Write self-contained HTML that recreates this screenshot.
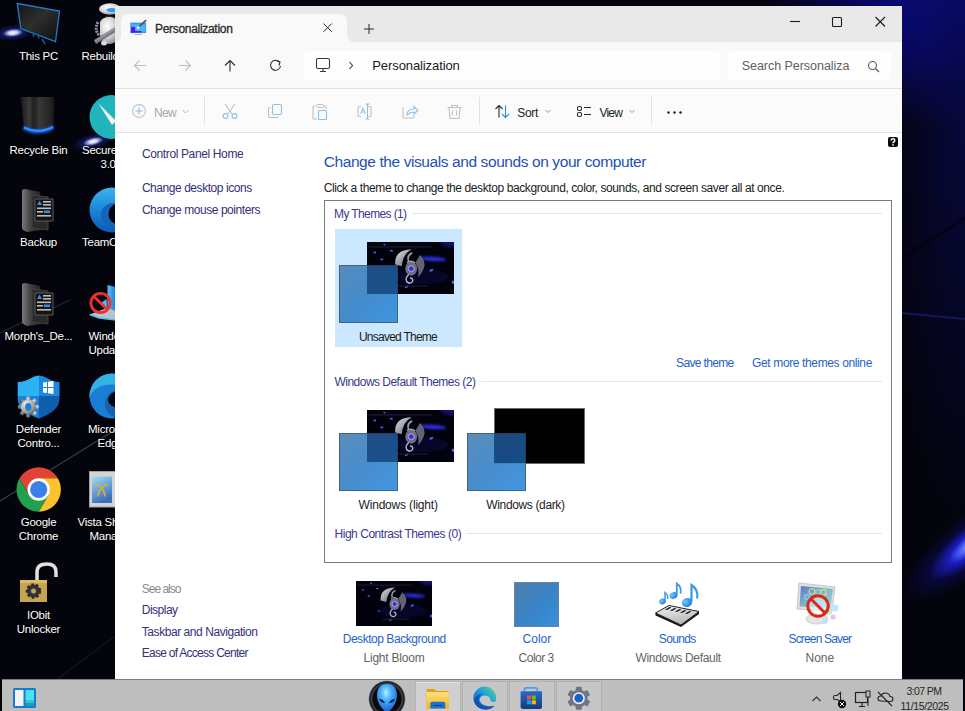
<!DOCTYPE html>
<html><head><meta charset="utf-8">
<style>
*{margin:0;padding:0;box-sizing:border-box}
html,body{width:965px;height:711px;overflow:hidden;background:#000;font-family:"Liberation Sans",sans-serif}
.a{position:absolute}
.t{position:absolute;white-space:nowrap}
svg.a{overflow:visible}
.lbl{position:absolute;color:#fff;font-size:11.5px;line-height:14px;text-align:center;width:90px;white-space:nowrap;text-shadow:1px 1px 1px #000,0 0 2px #000;letter-spacing:-0.25px}
</style></head><body>
<svg width="0" height="0" style="position:absolute"><defs><symbol id="wall" viewBox="0 0 100 60" preserveAspectRatio="none">
<defs>
<filter id="bl2" x="-50%" y="-50%" width="200%" height="200%"><feGaussianBlur stdDeviation="2"/></filter>
<filter id="bl1" x="-50%" y="-50%" width="200%" height="200%"><feGaussianBlur stdDeviation="0.5"/></filter>
<filter id="bl15" x="-50%" y="-50%" width="200%" height="200%"><feGaussianBlur stdDeviation="1.2"/></filter>
<linearGradient id="wing" x1="0" y1="0" x2="1" y2="1"><stop offset="0" stop-color="#e4e4ec"/><stop offset="1" stop-color="#5a5a68"/></linearGradient>
</defs>
<rect width="100" height="60" fill="#02020c"/>
<ellipse cx="100" cy="0" rx="16" ry="6" fill="#1a1ab0" opacity="0.55" filter="url(#bl2)"/>
<ellipse cx="62" cy="40" rx="32" ry="9" fill="#0a0a50" opacity="0.45" filter="url(#bl2)"/>
<ellipse cx="76" cy="19.5" rx="15" ry="2.6" fill="#3434ff" opacity="0.85" filter="url(#bl15)" transform="rotate(4 76 19.5)"/>
<g filter="url(#bl1)" fill="#5060ff">
<ellipse cx="9" cy="12" rx="1.6" ry="1"/><ellipse cx="17" cy="20" rx="1.8" ry="1.1"/><ellipse cx="28" cy="10" rx="1.8" ry="1.1"/>
<ellipse cx="20" cy="3" rx="1.4" ry="0.9"/><ellipse cx="74" cy="32.6" rx="2.4" ry="1.3" transform="rotate(-25 74 32.6)"/><ellipse cx="99" cy="46.5" rx="1.5" ry="2"/>
<ellipse cx="45.5" cy="51.6" rx="2.2" ry="1.2" transform="rotate(-25 45.5 51.6)"/><ellipse cx="30" cy="40" rx="1.5" ry="1"/>
</g>
<rect x="2" y="4.6" width="72" height="2" fill="#1c1c34" opacity="0.7"/>
<rect x="35" y="50" width="35" height="2" fill="#1c1c34" opacity="0.7"/>
<g filter="url(#bl1)">
<path d="M32.5 26 Q31 9 51.5 8.5 Q41 14 40 28 Z" fill="url(#wing)"/>
<path d="M61 15 Q68 22 65.5 30 Q63 37 58.5 41 Q61 32 55.5 24 Z" fill="#646474"/>
<ellipse cx="50.8" cy="30.7" rx="6.8" ry="8" fill="#707080"/>
<path d="M46 24 Q50 20 55 24" stroke="#b0b0bc" stroke-width="1.4" fill="none"/>
<circle cx="50.8" cy="30.7" r="3.3" fill="#2e2ee6" stroke="#c4c4d0" stroke-width="1"/>
<path d="M47.5 22 Q46 15 52 12.5" stroke="#9a9aa8" stroke-width="2" fill="none"/>
<path d="M48 37.5 Q43 42 46 46 Q50 49.5 52.5 45 Q53 41.5 49.5 41.5" stroke="#b8b8c4" stroke-width="1.6" fill="none"/>
</g>
</symbol><symbol id="csq" viewBox="0 0 60 60" preserveAspectRatio="none">
<defs><linearGradient id="cg" x1="0" y1="0" x2="1" y2="1"><stop offset="0" stop-color="#5084b4"/><stop offset="0.5" stop-color="#3a84c8"/><stop offset="1" stop-color="#3290e0"/></linearGradient></defs>
<rect x="0.5" y="0.5" width="59" height="59" fill="url(#cg)" fill-opacity="0.93" stroke="#40607e" stroke-width="1"/>
</symbol></defs></svg>

<!-- desktop background -->
<div class="a" style="left:0;top:0;width:965px;height:711px;background:#04040d"></div>
<div class="a" style="left:0;top:0;width:965px;height:711px;background:radial-gradient(ellipse 200px 130px at 965px 0px,#0c0c90 0%,#08086a 45%,rgba(3,3,20,0) 100%)"></div>
<div class="a" style="left:0;top:0;width:965px;height:711px;background:radial-gradient(ellipse 80px 420px at 965px 120px,rgba(8,8,70,0.8) 0%,rgba(3,3,20,0) 100%)"></div>
<div class="a" style="left:886px;top:516px;width:170px;height:56px;transform:rotate(-40deg);background:radial-gradient(ellipse 50% 50% at 50% 50%,#d8e0ff 0%,#5a70ff 12%,#1c1cc0 32%,rgba(10,10,90,0.55) 62%,rgba(3,3,20,0) 100%)"></div>
<svg class="a" style="left:0;top:0" width="965" height="711">
 <path d="M0 333 L70 300" stroke="#26263a" stroke-width="1.2"/>
 <path d="M0 501 L115 430" stroke="#3a3a4c" stroke-width="1.2"/>
 <path d="M55 681 L115 636" stroke="#121230" stroke-width="1.2"/>
 <path d="M902 313 L965 319" stroke="#16165a" stroke-width="2"/>
 <path d="M902 258 L965 218" stroke="#020208" stroke-width="3" opacity="0.6"/>
</svg>
<!-- blooms -->
<div class="a" style="left:-9px;top:25px;width:40px;height:16px;background:radial-gradient(ellipse 50% 50% at 55% 50%,#ffffff 0%,#c8d0ff 22%,rgba(40,50,200,0.45) 50%,rgba(0,0,0,0) 100%);transform:rotate(-6deg)"></div>
<div class="a" style="left:70px;top:134px;width:42px;height:16px;background:radial-gradient(ellipse 50% 50% at 55% 50%,#ffffff 0%,#c8d0ff 20%,rgba(40,50,200,0.4) 50%,rgba(0,0,0,0) 100%);transform:rotate(-14deg)"></div>
<!-- desktop icons column 1 -->
<!-- This PC -->
<svg class="a" style="left:0;top:0" width="70" height="50" viewBox="0 0 70 50">
 <defs><radialGradient id="pcglow" cx="0.5" cy="0.5" r="0.5"><stop offset="0" stop-color="#e8ecff"/><stop offset="0.35" stop-color="#3a4ad8"/><stop offset="1" stop-color="#000" stop-opacity="0"/></radialGradient>
 <linearGradient id="pcscr" x1="0" y1="0" x2="1" y2="1"><stop offset="0" stop-color="#141414"/><stop offset="0.45" stop-color="#2e2e2e"/><stop offset="1" stop-color="#0c0c0c"/></linearGradient></defs>
 
 <path d="M17.3 3.5 L59.5 11 L55.5 41.5 L20.8 28.5 Z" fill="url(#pcscr)" stroke="#1e7cc8" stroke-width="1.3"/>
 <path d="M33 34 L34 37 M38 36 L39 38.5 M42 39 L45 44" stroke="#1a5a90" stroke-width="1.5" fill="none"/>
</svg>
<!-- Recycle Bin -->
<svg class="a" style="left:18px;top:94px" width="40" height="46" viewBox="0 0 40 46">
 <defs><linearGradient id="rb" x1="0" x2="1"><stop offset="0" stop-color="#1a1a1a"/><stop offset="0.25" stop-color="#3a3a3a"/><stop offset="0.38" stop-color="#202020"/><stop offset="0.55" stop-color="#383838"/><stop offset="0.85" stop-color="#262626"/><stop offset="1" stop-color="#151515"/></linearGradient>
 <filter id="rbglow" x="-30%" y="-100%" width="160%" height="300%"><feGaussianBlur stdDeviation="1.2"/></filter></defs>
 <path d="M3 3 H36.5 L35.5 33 Q20 39 5.8 33 Z" fill="url(#rb)"/>
 <path d="M5.5 33.5 Q20 42 35.5 33" stroke="#1a5ad8" stroke-width="4" fill="none" filter="url(#rbglow)"/>
 <path d="M6 33.5 Q20 40.5 35 33" stroke="#2a90ff" stroke-width="2" fill="none"/>
</svg>
<!-- Backup folder -->
<svg class="a" style="left:20px;top:188px" width="36" height="46" viewBox="0 0 36 46">
 <defs><linearGradient id="fold" x1="0" x2="1"><stop offset="0" stop-color="#777"/><stop offset="0.5" stop-color="#3a3a3a"/><stop offset="1" stop-color="#222"/></linearGradient></defs>
 <path d="M2 3 Q2 1 5 1 L20 4 L22 42 L7 44 Q2 42 2 40 Z" fill="url(#fold)"/>
 <path d="M12 7 L28 9 L28 42 L12 40 Z" fill="#2a2a2a" stroke="#4a4a4a" stroke-width="0.8"/>
 <path d="M15 11 H33 V33 H15 Z" fill="#151515" stroke="#5a5a5a" stroke-width="1"/>
 <path d="M17 17 L19.5 12.5 L22 17 Z" fill="#3a8ae8"/>
 <rect x="23" y="13" width="8" height="1.6" fill="#bbb"/><rect x="23" y="16" width="8" height="1.6" fill="#bbb"/><rect x="17" y="19.5" width="14" height="1.6" fill="#bbb"/>
 <rect x="17" y="23" width="6" height="1.6" fill="#bbb"/><rect x="24" y="22.5" width="6" height="2.6" fill="#3a8ae8"/><rect x="17" y="27" width="14" height="1.6" fill="#bbb"/>
</svg>
<!-- Morph's -->
<svg class="a" style="left:20px;top:282px" width="36" height="46" viewBox="0 0 36 46">
 <path d="M2 3 Q2 1 5 1 L20 4 L22 42 L7 44 Q2 42 2 40 Z" fill="url(#fold)"/>
 <path d="M12 7 L28 9 L28 42 L12 40 Z" fill="#2a2a2a" stroke="#4a4a4a" stroke-width="0.8"/>
 <path d="M15 11 H33 V33 H15 Z" fill="#151515" stroke="#5a5a5a" stroke-width="1"/>
 <path d="M17 17 L19.5 12.5 L22 17 Z" fill="#3a8ae8"/>
 <rect x="23" y="13" width="8" height="1.6" fill="#bbb"/><rect x="23" y="16" width="8" height="1.6" fill="#bbb"/><rect x="17" y="19.5" width="14" height="1.6" fill="#bbb"/>
 <rect x="17" y="23" width="6" height="1.6" fill="#bbb"/><rect x="24" y="22.5" width="6" height="2.6" fill="#3a8ae8"/><rect x="17" y="27" width="14" height="1.6" fill="#bbb"/>
</svg>
<!-- Defender -->
<svg class="a" style="left:16px;top:373px" width="46" height="48" viewBox="0 0 46 48">
 <defs><clipPath id="shclip"><path d="M1.7 9 Q9 9 15 5 Q23 0 31 5 Q37 9 43.5 9 V26 Q43.5 38 23 45.5 Q1.7 38 1.7 26 Z"/></clipPath>
 <radialGradient id="gearg" cx="0.35" cy="0.3" r="0.8"><stop offset="0" stop-color="#f0f0f0"/><stop offset="0.6" stop-color="#a8a8a8"/><stop offset="1" stop-color="#5a5a5a"/></radialGradient></defs>
 <g clip-path="url(#shclip)">
  <rect x="0" y="0" width="23" height="23" fill="#2ab2f2"/>
  <rect x="23" y="0" width="23" height="23" fill="#1a88e2"/>
  <rect x="0" y="23" width="23" height="25" fill="#1a80da"/>
  <rect x="23" y="23" width="23" height="25" fill="#105eae"/>
 </g>
 <path d="M27 9.5 L31 9 V14 H27 Z M32 8.8 L37.5 8 V14 H32 Z M27 15 H31 V20 L27 19.5 Z M32 15 H37.5 V21 L32 20.2 Z" fill="#fff"/>
 <g transform="translate(12.3 34)">
  <g fill="url(#gearg)"><rect x="-2" y="-10.5" width="4" height="21" rx="1"/><rect x="-2" y="-10.5" width="4" height="21" rx="1" transform="rotate(45)"/><rect x="-2" y="-10.5" width="4" height="21" rx="1" transform="rotate(90)"/><rect x="-2" y="-10.5" width="4" height="21" rx="1" transform="rotate(135)"/></g>
  <circle r="7.6" fill="url(#gearg)"/>
  <ellipse cx="0" cy="0" rx="3.2" ry="4" fill="#1a80da"/>
 </g>
</svg>
<!-- Chrome -->
<svg class="a" style="left:16px;top:467px" width="46" height="46" viewBox="0 0 46 46">
 <defs><clipPath id="chc"><circle cx="0" cy="0" r="22.2"/></clipPath></defs>
 <g transform="translate(22.7 22.5)" clip-path="url(#chc)">
  <polygon points="0,0 -9.7,5.6 -39.7,-46.4 40,-46.4 40,-11.2 0,-11.2" fill="#e04434"/>
  <polygon points="0,0 0,-11.2 40,-11.2 40,40.2 -10.3,40.2 9.7,5.6" fill="#fbc12e"/>
  <polygon points="0,0 9.7,5.6 -10.3,40.2 -40,40.2 -39.7,-46.4 -9.7,5.6" fill="#22a050"/>
  <circle r="11.2" fill="#fff"/>
  <circle r="8.6" fill="#3b7fea"/>
 </g>
</svg>
<!-- IObit Unlocker -->
<svg class="a" style="left:18px;top:562px" width="42" height="44" viewBox="0 0 42 44">
 <path d="M19 19 V10 Q19 2 29 2 Q38 2 38 10 V15" stroke="#e0e0e0" stroke-width="3.5" fill="none"/>
 <rect x="2" y="18" width="27" height="22" fill="#c4a450"/>
 <rect x="2" y="18" width="27" height="3" fill="#d8bc68"/>
 <circle cx="15.5" cy="29" r="6.5" fill="#333" stroke="#2a2a2a" stroke-width="2.5" stroke-dasharray="2.6 2"/>
 <circle cx="15.5" cy="29" r="2.5" fill="#c4a450"/>
</svg>

<!-- column 2 icons (clipped by window) -->
<svg class="a" style="left:90px;top:0px" width="30" height="50" viewBox="0 0 30 50">
 <defs><radialGradient id="robw" cx="0.4" cy="0.35" r="0.7"><stop offset="0" stop-color="#ffffff"/><stop offset="0.6" stop-color="#d0d0d4"/><stop offset="1" stop-color="#8a8a90"/></radialGradient></defs>
 <ellipse cx="20" cy="9" rx="11" ry="5.8" fill="url(#robw)"/>
 <ellipse cx="22" cy="10" rx="5.5" ry="2" fill="#2a9aff"/>
 <ellipse cx="19" cy="17" rx="4" ry="1.6" fill="#2a2a3a"/>
 <path d="M10 22 Q12 17 20 17 Q27 17 28 24 V38 Q26 44 18 44 Q11 42 10 36 Z" fill="url(#robw)"/>
 <path d="M8 22 Q4 30 9 35" stroke="#8a94a8" stroke-width="3" fill="none" stroke-dasharray="2 1"/>
 <path d="M4 40 L27 26 L29 30 L6 44 Z" fill="#7a7a8a"/>
 <path d="M5 41 L27 27.5" stroke="#b0b0c0" stroke-width="0.8"/>
 <ellipse cx="14" cy="43" rx="3" ry="2.5" fill="#d8d8dc"/>
</svg>
<svg class="a" style="left:89px;top:95px" width="30" height="46" viewBox="0 0 30 46">
 <circle cx="22.5" cy="22" r="22" fill="#22b4bc"/>
 <path d="M9.5 8.5 L27 26 L23 30 Z" fill="#f4f4f4"/>
</svg>
<svg class="a" style="left:89px;top:187px" width="30" height="46" viewBox="0 0 30 46">
 <defs><linearGradient id="tmg" x1="0" y1="0" x2="0" y2="1"><stop offset="0" stop-color="#3ab4ec"/><stop offset="0.5" stop-color="#1a86d8"/><stop offset="1" stop-color="#1058b0"/></linearGradient></defs>
 <circle cx="23" cy="23" r="22.5" fill="url(#tmg)"/>
 <path d="M1 26 Q6 13 22 13 Q32 13 40 18 Q30 10 20 12" fill="none"/>
 <ellipse cx="24" cy="28" rx="12" ry="12" fill="#1464bc"/>
 <ellipse cx="28" cy="27" rx="8.5" ry="10" fill="#05050f"/>
</svg>
<svg class="a" style="left:88px;top:284px" width="30" height="38" viewBox="0 0 30 38">
 <defs><linearGradient id="wup" x1="0" y1="0" x2="1" y2="0"><stop offset="0" stop-color="#58c0f8"/><stop offset="1" stop-color="#1a7ad8"/></linearGradient></defs>
 <path d="M19.5 1 L28 3 V28 L19.5 26 Z" fill="url(#wup)"/>
 <path d="M1.5 30.5 L19 24 L28 27 V36 L11 34 Z" fill="#b8c4cc"/>
 <path d="M1.5 30.5 L11 34 L28 36" stroke="#58b8f0" stroke-width="1.4" fill="none"/>
 <path d="M13 19 L18.5 15 L19 24" fill="#58b8f0"/>
 <circle cx="12.5" cy="19" r="9.6" fill="none" stroke="#ee3030" stroke-width="2.8"/>
 <path d="M6 12.5 L19 25.5" stroke="#ee3030" stroke-width="2.8"/>
</svg>
<svg class="a" style="left:89px;top:373px" width="30" height="46" viewBox="0 0 30 46">
 <defs><clipPath id="edc"><circle cx="23" cy="23" r="22.5"/></clipPath></defs>
 <g clip-path="url(#edc)">
 <rect x="0" y="0" width="46" height="46" fill="#1a7ed6"/>
 <path d="M0 26 Q4 12 22 11.5 Q38 11.5 46 20 V0 H0 Z" fill="#34b2e6"/>
 <circle cx="30" cy="31" r="14" fill="#1760b0"/>
 <ellipse cx="29.5" cy="26.5" rx="10.5" ry="8.2" fill="#05050f"/>
 </g>
</svg>
<svg class="a" style="left:89px;top:471px" width="30" height="38" viewBox="0 0 30 38">
 <defs><linearGradient id="vsg" x1="0" y1="0" x2="0.4" y2="1"><stop offset="0" stop-color="#a8daf4"/><stop offset="0.5" stop-color="#6aa8dc"/><stop offset="1" stop-color="#3a70b8"/></linearGradient></defs>
 <rect x="0.5" y="0.5" width="28" height="35.5" fill="#d4d4d4" stroke="#a0a0a0"/>
 <rect x="3" y="5.5" width="20" height="26.5" fill="url(#vsg)"/>
 <path d="M5.5 14 Q9 13 12.5 17 Q16 21 16 25.5 M19.5 14 Q16 13 12.5 17 Q9 21 9 25.5" stroke="#e0b030" stroke-width="1.5" fill="none"/>
</svg>

<!-- desktop labels -->
<div class="lbl" style="left:-6.5px;top:49px">This PC</div>
<div class="lbl" style="left:-6.5px;top:143px">Recycle Bin</div>
<div class="lbl" style="left:-6.5px;top:235px">Backup</div>
<div class="lbl" style="left:-6.5px;top:329px">Morph's_De...</div>
<div class="lbl" style="left:-6.5px;top:422px">Defender<br>Contro...</div>
<div class="lbl" style="left:-6.5px;top:515px">Google<br>Chrome</div>
<div class="lbl" style="left:-6.5px;top:608px">IObit<br>Unlocker</div>
<div class="lbl" style="left:81.5px;top:49px;text-align:left">Rebuild</div>
<div class="lbl" style="left:82px;top:143px;text-align:left">Secure<br><span style="padding-left:18.5px">3.0</span></div>
<div class="lbl" style="left:82px;top:235px;text-align:left">TeamC</div>
<div class="lbl" style="left:88.5px;top:329px;text-align:left">Windows<br>Update</div>
<div class="lbl" style="left:88px;top:422px;text-align:left">Microsoft<br><span style="padding-left:9.5px">Edge</span></div>
<div class="lbl" style="left:77.5px;top:515px;text-align:left">Vista Shortcut<br><span style="padding-left:12px">Manager</span></div>
<!-- WINDOW -->
<div class="a" style="left:115px;top:6px;width:787px;height:673px;background:#fff"></div>
<div class="a" style="left:115px;top:6px;width:787px;height:36px;background:#e9e9e9"></div>
<div class="a" style="left:121px;top:14px;width:226px;height:28px;background:#f9f9f9;border-radius:7px 7px 0 0"></div>
<div class="a" style="left:115px;top:42px;width:787px;height:46px;background:#f9f9f9"></div>
<div class="a" style="left:347px;top:34px;width:8px;height:8px;background:#f9f9f9"></div>
<div class="a" style="left:347px;top:34px;width:8px;height:8px;background:#e9e9e9;border-bottom-left-radius:7px"></div>
<div class="a" style="left:115px;top:34px;width:6px;height:8px;background:#f9f9f9"></div>
<div class="a" style="left:115px;top:34px;width:6px;height:8px;background:#e9e9e9;border-bottom-right-radius:6px"></div>
<div class="a" style="left:115px;top:88px;width:787px;height:1px;background:#e1e1e1"></div>
<div class="a" style="left:115px;top:89px;width:787px;height:43px;background:#fbfbfb"></div>
<div class="a" style="left:115px;top:132px;width:787px;height:1px;background:#e1e1e1"></div>
<div class="a" style="left:304px;top:51px;width:416px;height:29px;background:#fefefe;border-radius:5px"></div>
<div class="a" style="left:728px;top:51px;width:163px;height:29px;background:#fefefe;border-radius:5px"></div>

<!-- tab icon -->
<svg class="a" style="left:130px;top:19px" width="17" height="17" viewBox="0 0 17 17">
 <defs><linearGradient id="tabscr" x1="0" y1="0" x2="0" y2="1"><stop offset="0" stop-color="#30a8f0"/><stop offset="0.4" stop-color="#48c0ff"/><stop offset="1" stop-color="#3ab0f8"/></linearGradient></defs>
 <rect x="0.8" y="4" width="15" height="9.8" fill="url(#tabscr)" stroke="#2a80c0" stroke-width="0.6"/>
 <rect x="1.1" y="7.8" width="4" height="5.7" fill="#6a10f0"/>
 <rect x="1.1" y="12.2" width="10.5" height="1.3" fill="#4a10d0"/>
 <path d="M15.6 1.6 L9 7.8" stroke="#505860" stroke-width="1.8" stroke-linecap="round"/>
 <path d="M9.2 7.6 L7.2 9.6" stroke="#f0f8ff" stroke-width="2.2"/>
 <path d="M4.5 15.5 H12" stroke="#a8b0b8" stroke-width="0.9"/>
</svg>
<!-- tab close & plus -->
<svg class="a" style="left:322px;top:22px" width="11" height="11" viewBox="0 0 11 11"><path d="M1.5 1.5 L9.8 9.8 M9.8 1.5 L1.5 9.8" stroke="#2a2a2a" stroke-width="1"/></svg>
<svg class="a" style="left:363px;top:22.5px" width="12" height="12" viewBox="0 0 12 12"><path d="M6 1 V11 M1 6 H11" stroke="#2a2a2a" stroke-width="1"/></svg>
<!-- window controls -->
<svg class="a" style="left:789px;top:16px" width="100" height="12" viewBox="0 0 100 12">
 <path d="M1 5.5 H11" stroke="#1a1a1a" stroke-width="1.1"/>
 <rect x="43.5" y="1.5" width="9" height="9" rx="1" fill="none" stroke="#1a1a1a" stroke-width="1.1"/>
 <path d="M86.5 1 L96 10.5 M96 1 L86.5 10.5" stroke="#1a1a1a" stroke-width="1.1"/>
</svg>
<!-- nav arrows -->
<svg class="a" style="left:133px;top:59px" width="152" height="13" viewBox="0 0 152 13">
 <path d="M1.5 6.5 H13 M6.5 1.5 L1.5 6.5 L6.5 11.5" stroke="#bdbdbd" stroke-width="1.1" fill="none"/>
 <path d="M46 6.5 H57.5 M52.5 1.5 L57.5 6.5 L52.5 11.5" stroke="#bdbdbd" stroke-width="1.1" fill="none"/>
 <path d="M97 12.5 V1.5 M92 6.5 L97 1.5 L102 6.5" stroke="#2a2a2a" stroke-width="1.1" fill="none"/>
 <path d="M146.5 3.2 A5 5 0 1 0 147.5 7" stroke="#2a2a2a" stroke-width="1.1" fill="none"/>
 <path d="M143.5 1.5 L147 3 L146 6.5" stroke="#2a2a2a" stroke-width="1.1" fill="none"/>
</svg>
<!-- address monitor, chevron -->
<svg class="a" style="left:315px;top:57px" width="42" height="16" viewBox="0 0 42 16">
 <rect x="1.5" y="1.5" width="13" height="10" rx="1.5" fill="none" stroke="#3a3a3a" stroke-width="1.1"/>
 <path d="M5 14.5 H11 M8 11.5 V14.5" stroke="#3a3a3a" stroke-width="1.1"/>
 <path d="M34.5 5 L37.5 8.5 L34.5 12" stroke="#3a3a3a" stroke-width="1.1" fill="none"/>
</svg>
<!-- search icon -->
<svg class="a" style="left:867px;top:60px" width="13" height="13" viewBox="0 0 13 13">
 <circle cx="5.5" cy="5.5" r="4" fill="none" stroke="#5a5a5a" stroke-width="1.1"/><path d="M8.5 8.5 L12 12" stroke="#5a5a5a" stroke-width="1.2"/>
</svg>

<!-- command bar icons -->
<svg class="a" style="left:131px;top:103px" width="560" height="18" viewBox="0 0 560 18">
 <!-- new -->
 <circle cx="8" cy="8" r="6.4" fill="none" stroke="#c4c4c4" stroke-width="1.1"/>
 <path d="M8 4.5 V11.5 M4.5 8 H11.5" stroke="#8ac0ec" stroke-width="1.1"/>
 <path d="M51.5 7 L54.5 10 L57.5 7" stroke="#b0b0b0" stroke-width="0.9" fill="none"/>
 <!-- separator -->
 <path d="M73.5 -6 V22" stroke="#e2e2e2" stroke-width="1"/>
 <!-- cut -->
 <path d="M94 1 L101 11 M104 1 L97 11" stroke="#c0c0c0" stroke-width="1.1"/>
 <circle cx="94.5" cy="13" r="2.4" fill="none" stroke="#8ac0ec" stroke-width="1.1"/>
 <circle cx="103.5" cy="13" r="2.4" fill="none" stroke="#8ac0ec" stroke-width="1.1"/>
 <!-- copy -->
 <rect x="141.5" y="1.5" width="9" height="10" rx="1.5" fill="none" stroke="#8ac0ec" stroke-width="1.1"/>
 <path d="M139.5 4.5 H138.5 Q137.5 4.5 137.5 5.5 V13.5 Q137.5 14.5 138.5 14.5 H146 Q147 14.5 147 13.5" stroke="#c0c0c0" stroke-width="1.1" fill="none"/>
 <!-- paste -->
 <path d="M184 3 H182.5 Q182 3 182 4 V15 Q182 16 183 16 H186 M193 3 H194.5 Q195 3 195 4 V6" stroke="#c0c0c0" stroke-width="1.1" fill="none"/>
 <rect x="185.5" y="1.5" width="7" height="3" rx="1" fill="none" stroke="#c0c0c0" stroke-width="1"/>
 <rect x="187.5" y="7.5" width="8" height="9" rx="1" fill="none" stroke="#8ac0ec" stroke-width="1.1"/>
 <!-- rename -->
 <path d="M230 3.5 H228 Q227 3.5 227 4.5 V12.5 Q227 13.5 228 13.5 H230 M236 3.5 H239 Q240 3.5 240 4.5 V12.5 Q240 13.5 239 13.5 H236" stroke="#c0c0c0" stroke-width="1.1" fill="none"/>
 <path d="M229.5 11 L232 5 L234.5 11 M230.5 9 H233.5" stroke="#8ac0ec" stroke-width="1" fill="none"/>
 <path d="M236.5 1 V16 M234.5 1 H238.5 M234.5 16 H238.5" stroke="#8ac0ec" stroke-width="1" fill="none"/>
 <!-- share -->
 <path d="M273 5 H272.5 Q272 5 272 6 V14 Q272 15 273 15 H282 Q283 15 283 14 V12" stroke="#c0c0c0" stroke-width="1.1" fill="none"/>
 <path d="M276 12 Q276 6 283 6 V3.5 L287 7.5 L283 11 V9 Q279 9 276 12 Z" fill="none" stroke="#8ac0ec" stroke-width="1.1"/>
 <!-- delete -->
 <path d="M316.5 4.5 H330.5 M320.5 4.5 V2.5 H326.5 V4.5 M318 4.5 L319 15.5 H328 L329 4.5 M321.5 7.5 V12.5 M325.5 7.5 V12.5" stroke="#c0c0c0" stroke-width="1.1" fill="none"/>
 <!-- separator -->
 <path d="M348.5 -6 V22" stroke="#e2e2e2" stroke-width="1"/>
 <!-- sort -->
 <path d="M368 14.5 V2.5 M364.5 6 L368 2.5 L371.5 6" stroke="#2a2a2a" stroke-width="1.1" fill="none"/>
 <path d="M374.5 2.5 V14.5 M371 11 L374.5 14.5 L378 11" stroke="#2a8ae8" stroke-width="1.1" fill="none"/>
 <path d="M414.5 7 L417 9.5 L419.5 7" stroke="#8a8a8a" stroke-width="0.9" fill="none"/>
 <!-- view -->
 <rect x="446.5" y="3.5" width="4" height="4" rx="1.5" fill="none" stroke="#2a2a2a" stroke-width="1.1"/>
 <rect x="446.5" y="9.5" width="4" height="4" rx="1.5" fill="none" stroke="#2a2a2a" stroke-width="1.1"/>
 <path d="M453 4.5 H460 M453 11.5 H460" stroke="#2a2a2a" stroke-width="1.1"/>
 <path d="M498.5 7 L501 9.5 L503.5 7" stroke="#8a8a8a" stroke-width="0.9" fill="none"/>
 <!-- separator -->
 <path d="M520.5 -6 V22" stroke="#e2e2e2" stroke-width="1"/>
 <!-- more -->
 <circle cx="537.5" cy="9.5" r="1.2" fill="#1a1a1a"/><circle cx="543.5" cy="9.5" r="1.2" fill="#1a1a1a"/><circle cx="549.5" cy="9.5" r="1.2" fill="#1a1a1a"/>
</svg>

<!-- help icon -->
<svg class="a" style="left:888px;top:137px" width="10" height="10" viewBox="0 0 10 10"><rect width="10" height="10" rx="2" fill="#0a0a0a"/><path d="M3.2 3.6 Q3.2 1.8 5 1.8 Q6.8 1.8 6.8 3.4 Q6.8 4.4 5.6 5 Q5 5.3 5 6.3" stroke="#fff" stroke-width="1.5" fill="none"/><rect x="4.2" y="7.2" width="1.6" height="1.5" fill="#fff"/></svg>

<!-- theme box -->
<div class="a" style="left:324px;top:200px;width:568px;height:363px;border:1px solid #7a7a7a"></div>
<div class="a" style="left:412px;top:213px;width:470px;height:1px;background:#e6e6e6"></div>
<div class="a" style="left:481px;top:381px;width:401px;height:1px;background:#e6e6e6"></div>
<div class="a" style="left:466px;top:533px;width:416px;height:1px;background:#e6e6e6"></div>
<div class="a" style="left:335px;top:229px;width:127px;height:118px;background:#cce8ff"></div>
<svg class="a" style="left:367px;top:242px" width="87" height="52"><use href="#wall" width="87" height="52"/></svg>
<svg class="a" style="left:339px;top:265px" width="59" height="58"><use href="#csq" width="59" height="58"/></svg>
<div class="a" style="left:367px;top:265px;width:31px;height:29px;background:rgba(0,35,85,0.5)"></div>
<svg class="a" style="left:367px;top:410px" width="87" height="52"><use href="#wall" width="87" height="52"/></svg>
<svg class="a" style="left:339px;top:433px" width="59" height="58"><use href="#csq" width="59" height="58"/></svg>
<div class="a" style="left:367px;top:433px;width:31px;height:29px;background:rgba(0,35,85,0.5)"></div>
<div class="a" style="left:494px;top:408px;width:91px;height:56px;background:#000;border:1px solid #6a6a6a"></div>
<svg class="a" style="left:467px;top:433px" width="59" height="58"><use href="#csq" width="59" height="58"/></svg>
<div class="a" style="left:494px;top:433px;width:32px;height:30px;background:rgba(0,35,85,0.55)"></div>

<!-- bottom items -->
<svg class="a" style="left:356px;top:581px" width="76" height="45"><use href="#wall" width="76" height="45"/></svg>
<div class="a" style="left:514px;top:582px;width:45px;height:45px;background:linear-gradient(135deg,#4f7fab,#3a82c4 50%,#3692de);border:1px solid #6a84a0"></div>
<!-- sounds icon -->
<svg class="a" style="left:654px;top:581px" width="48" height="46" viewBox="0 0 48 46">
 <defs><radialGradient id="note" cx="0.35" cy="0.35" r="0.7"><stop offset="0" stop-color="#7ac8ff"/><stop offset="1" stop-color="#1a78d8"/></radialGradient>
 <linearGradient id="kb" x1="0" y1="0" x2="0.3" y2="1"><stop offset="0" stop-color="#f4f4f4"/><stop offset="1" stop-color="#b8b8b8"/></linearGradient></defs>
 <ellipse cx="8.5" cy="20.5" rx="3.4" ry="2.8" fill="url(#note)" transform="rotate(-20 8.5 20.5)"/><path d="M11 20 V11.5 Q14.5 14 13.5 18" stroke="#3a9ae8" stroke-width="1.5" fill="none"/>
 <ellipse cx="19.5" cy="14.5" rx="4" ry="3.2" fill="url(#note)" transform="rotate(-20 19.5 14.5)"/><path d="M22.8 14 V2.5 Q28 6 26.5 12.5" stroke="#3a9ae8" stroke-width="1.8" fill="none"/>
 <ellipse cx="33" cy="21.5" rx="5.2" ry="4.4" fill="url(#note)" transform="rotate(-20 33 21.5)"/><path d="M37.5 20.5 V4 Q45 9 43 17.5" stroke="#3a9ae8" stroke-width="2.2" fill="none"/>
 <path d="M1.5 32 L15 24.5 L45 30.5 L27 44 Z" fill="url(#kb)" stroke="#202020" stroke-width="1"/>
 <path d="M1.5 32 L27 44 L45 30.5 L45 33 L27 46 L1.5 34.5 Z" fill="#1a1a1a"/>
 <g fill="#1a1a1a"><path d="M11 28.5 L15.5 26 L17.5 26.4 L13 29 Z"/><path d="M16 29.5 L20.5 27 L22.5 27.4 L18 30 Z"/><path d="M21 30.5 L25.5 28 L27.5 28.4 L23 31 Z"/><path d="M26 31.5 L30.5 29 L32.5 29.4 L28 32 Z"/><path d="M31 32.5 L35.5 30 L37.5 30.4 L33 33 Z"/></g>
</svg>
<!-- screen saver icon -->
<svg class="a" style="left:795px;top:581px" width="48" height="46" viewBox="0 0 48 46">
 <defs><linearGradient id="ssscr" x1="0" y1="0" x2="1" y2="1"><stop offset="0" stop-color="#5a78c0"/><stop offset="0.5" stop-color="#7ab8c8"/><stop offset="1" stop-color="#a8d8e8"/></linearGradient></defs>
 <path d="M4 2 L40 6 L37 30 L2 28 Z" fill="#e0e0e0" stroke="#c8c8c8"/>
 <path d="M6 5 L38 8 L35.5 27 L4.5 25.5 Z" fill="url(#ssscr)"/>
 <g fill="none" stroke-width="1.2" opacity="0.8"><circle cx="17" cy="10.5" r="2.8" stroke="#e8e890"/><circle cx="23" cy="11" r="2.4" stroke="#a8e8b0"/><circle cx="28.5" cy="11.5" r="2.8" stroke="#e8e890"/><circle cx="12" cy="16" r="2.4" stroke="#a0d0ff"/></g>
 <ellipse cx="22" cy="38" rx="11" ry="5" fill="#e4e4e4" stroke="#cfcfcf"/>
 <circle cx="40" cy="27" r="3.5" fill="#bfe6ff"/><circle cx="38" cy="36" r="2.6" fill="#f6b8f0"/><circle cx="30" cy="40" r="2.8" fill="#b8e0ff"/><circle cx="34" cy="31" r="3" fill="#c0f0c8"/>
 <circle cx="23" cy="25" r="10.2" fill="rgba(255,255,255,0.45)" stroke="#d82a1a" stroke-width="3"/>
 <path d="M16 18 L30 32" stroke="#d82a1a" stroke-width="3"/>
</svg>

<div class="t" style="left:155.0px;top:23.00px;font-size:12px;line-height:12px;font-weight:400;color:#2a2a2a;letter-spacing:-0.303px;-webkit-text-stroke:0.3px #2a2a2a">Personalization</div>
<div class="t" style="left:372.3px;top:59.00px;font-size:13px;line-height:13px;font-weight:400;color:#1b1b1b;letter-spacing:-0.099px">Personalization</div>
<div class="t" style="left:741.7px;top:60.00px;font-size:12.5px;line-height:12.5px;font-weight:400;color:#5f5f5f;letter-spacing:-0.035px">Search Personaliza</div>
<div class="t" style="left:154.0px;top:107.00px;font-size:12px;line-height:12px;font-weight:400;color:#a8a8a8;letter-spacing:-0.703px">New</div>
<div class="t" style="left:517.2px;top:107.00px;font-size:12px;line-height:12px;font-weight:400;color:#1b1b1b;letter-spacing:-0.303px">Sort</div>
<div class="t" style="left:599.5px;top:107.00px;font-size:12px;line-height:12px;font-weight:400;color:#1b1b1b;letter-spacing:-0.831px">View</div>
<div class="t" style="left:141.9px;top:148.00px;font-size:12px;line-height:12px;font-weight:400;color:#35307a;letter-spacing:-0.368px">Control Panel Home</div>
<div class="t" style="left:141.9px;top:182.00px;font-size:12px;line-height:12px;font-weight:400;color:#35307a;letter-spacing:-0.445px">Change desktop icons</div>
<div class="t" style="left:141.9px;top:204.00px;font-size:12px;line-height:12px;font-weight:400;color:#35307a;letter-spacing:-0.441px">Change mouse pointers</div>
<div class="t" style="left:323.7px;top:154.00px;font-size:15.5px;line-height:15.5px;font-weight:400;color:#2450b4;letter-spacing:-0.409px">Change the visuals and sounds on your computer</div>
<div class="t" style="left:323.7px;top:182.00px;font-size:12px;line-height:12px;font-weight:400;color:#1b1b1b;letter-spacing:-0.401px">Click a theme to change the desktop background, color, sounds, and screen saver all at once.</div>
<div class="t" style="left:334.1px;top:208.00px;font-size:12px;line-height:12px;font-weight:400;color:#3b3790;letter-spacing:-0.623px">My Themes (1)</div>
<div class="t" style="left:358.9px;top:331.00px;font-size:12px;line-height:12px;font-weight:400;color:#1b1b1b;letter-spacing:-0.745px">Unsaved Theme</div>
<div class="t" style="left:676.1px;top:357.00px;font-size:12px;line-height:12px;font-weight:400;color:#1f62c8;letter-spacing:-0.649px">Save theme</div>
<div class="t" style="left:752.1px;top:357.00px;font-size:12px;line-height:12px;font-weight:400;color:#1f62c8;letter-spacing:-0.374px">Get more themes online</div>
<div class="t" style="left:334.5px;top:376.00px;font-size:12px;line-height:12px;font-weight:400;color:#3b3790;letter-spacing:-0.525px">Windows Default Themes (2)</div>
<div class="t" style="left:358.5px;top:499.00px;font-size:12px;line-height:12px;font-weight:400;color:#1b1b1b;letter-spacing:-0.180px">Windows (light)</div>
<div class="t" style="left:486.3px;top:499.00px;font-size:12px;line-height:12px;font-weight:400;color:#1b1b1b;letter-spacing:-0.358px">Windows (dark)</div>
<div class="t" style="left:334.5px;top:528.00px;font-size:12px;line-height:12px;font-weight:400;color:#3b3790;letter-spacing:-0.463px">High Contrast Themes (0)</div>
<div class="t" style="left:141.8px;top:583.00px;font-size:12px;line-height:12px;font-weight:400;color:#8a8a8a;letter-spacing:-1.014px">See also</div>
<div class="t" style="left:141.8px;top:604.00px;font-size:12px;line-height:12px;font-weight:400;color:#35307a;letter-spacing:-0.508px">Display</div>
<div class="t" style="left:141.8px;top:625.50px;font-size:12px;line-height:12px;font-weight:400;color:#35307a;letter-spacing:-0.443px">Taskbar and Navigation</div>
<div class="t" style="left:141.8px;top:647.00px;font-size:12px;line-height:12px;font-weight:400;color:#35307a;letter-spacing:-0.733px">Ease of Access Center</div>
<div class="t" style="left:342.7px;top:633.00px;font-size:12px;line-height:12px;font-weight:400;color:#1f62c8;letter-spacing:-0.459px">Desktop Background</div>
<div class="t" style="left:363.5px;top:652.00px;font-size:12px;line-height:12px;font-weight:400;color:#646464;letter-spacing:-0.217px">Light Bloom</div>
<div class="t" style="left:522.5px;top:633.00px;font-size:12px;line-height:12px;font-weight:400;color:#1f62c8;letter-spacing:0.031px">Color</div>
<div class="t" style="left:518.5px;top:652.00px;font-size:12px;line-height:12px;font-weight:400;color:#646464;letter-spacing:-0.481px">Color 3</div>
<div class="t" style="left:658.8px;top:633.00px;font-size:12px;line-height:12px;font-weight:400;color:#1f62c8;letter-spacing:-0.640px">Sounds</div>
<div class="t" style="left:635.5px;top:652.00px;font-size:12px;line-height:12px;font-weight:400;color:#646464;letter-spacing:-0.317px">Windows Default</div>
<div class="t" style="left:788.5px;top:633.00px;font-size:12px;line-height:12px;font-weight:400;color:#1f62c8;letter-spacing:-0.837px">Screen Saver</div>
<div class="t" style="left:805.5px;top:652.00px;font-size:12px;line-height:12px;font-weight:400;color:#646464;letter-spacing:-0.029px">None</div>

<!-- TASKBAR -->
<div class="a" style="left:2px;top:679px;width:961px;height:32px;background:#bebebe;border-top:1px solid #7e7e7e"></div>
<svg class="a" style="left:12px;top:687px" width="26" height="22" viewBox="0 0 26 22">
 <rect x="1" y="1" width="23" height="20" rx="1.5" fill="#1a78d8"/>
 <rect x="3" y="3" width="8.5" height="16" fill="#f4f4f4"/>
 <rect x="13.5" y="3" width="8.5" height="10" fill="#48e4ec"/>
 <rect x="13.5" y="13" width="8.5" height="3" fill="#32c4d0"/>
 <rect x="13.5" y="16" width="8.5" height="3" fill="#1aa0b0"/>
</svg>
<!-- taskbar buttons -->
<div class="a" style="left:415px;top:681px;width:46px;height:30px;background:#d0d0d0;border:1px solid #b4b4b4;border-bottom:none;box-shadow:inset 0 1px 0 #e4e4e4"></div>
<div class="a" style="left:462px;top:681px;width:46px;height:30px;background:#c6c6c6;border:1px solid #b0b0b0;border-bottom:none"></div>
<div class="a" style="left:509px;top:681px;width:46px;height:30px;background:#c6c6c6;border:1px solid #b0b0b0;border-bottom:none"></div>
<div class="a" style="left:556px;top:681px;width:46px;height:30px;background:#c6c6c6;border:1px solid #b0b0b0;border-bottom:none"></div>
<svg class="a" style="left:360px;top:679px" width="250" height="32" viewBox="0 0 250 32">
 <defs><radialGradient id="alien" cx="0.45" cy="0.3" r="0.7"><stop offset="0" stop-color="#b8ecff"/><stop offset="0.35" stop-color="#4ab4ff"/><stop offset="1" stop-color="#1a5ad0"/></radialGradient>
 <linearGradient id="fold2" x1="0" y1="0" x2="0" y2="1"><stop offset="0" stop-color="#ffe07a"/><stop offset="1" stop-color="#f4b420"/></linearGradient>
 <linearGradient id="edgeg" x1="0" y1="1" x2="1" y2="0"><stop offset="0" stop-color="#0c4ea8"/><stop offset="0.55" stop-color="#1c9ae8"/><stop offset="1" stop-color="#5ee07a"/></linearGradient>
 <linearGradient id="storeg" x1="0" y1="0" x2="0" y2="1"><stop offset="0" stop-color="#2a6ac8"/><stop offset="1" stop-color="#163a80"/></linearGradient></defs>
 <circle cx="27" cy="20" r="18.3" fill="#1a1a1a" stroke="#9ab8d0" stroke-width="0.8"/>
 <circle cx="27" cy="20" r="15.5" fill="#0a0a0a" stroke="#3a3a3a" stroke-width="2"/>
 <path d="M27 5 Q37 5 37 17 Q37 26 27 34 Q17 26 17 17 Q17 5 27 5 Z" fill="url(#alien)"/>
 <path d="M19 20 Q23 20 25 24 Q21 24 19 20 Z M35 20 Q31 20 29 24 Q33 24 35 20 Z" fill="#061a38"/>
 <!-- file explorer -->
 <path d="M66.7 10 H74 L76 12 H88.9 V29.6 H66.7 Z" fill="#e2a00c"/>
 <rect x="66.7" y="13" width="22.2" height="16.6" fill="url(#fold2)"/>
 <path d="M70.3 29.6 V24.5 Q70.3 22.8 72 22.8 H83.6 Q85.3 22.8 85.3 24.5 V29.6 Z" fill="#1a72d8"/>
 <path d="M73.5 26.5 H82" stroke="#0a3a80" stroke-width="1"/>
 <!-- edge -->
 <circle cx="124.8" cy="19" r="11.4" fill="url(#edgeg)"/>
 <path d="M114 22 Q117 31 127 30.5 Q133 30 135.5 25 Q131 28 126 27.5 Q119 26.5 118.5 21 Q118.5 16 124 15 Q116 14 114 22 Z" fill="#0f55b0"/>
 <path d="M119.5 21.5 Q120 16.5 125 16.5 Q130 16.8 130.5 21 Q131 24 136.5 22.5 L136.5 26 Q132 28 127 27 Q121 26 119.5 21.5 Z" fill="#c6c6c6"/>
 <path d="M119.5 21.5 Q121 26 127 27 Q122 27 120 24 Z" fill="#1a6ac8"/>
 <!-- store -->
 <path d="M164.5 12.5 V10.5 Q164.5 8.8 166.2 8.8 H175.6 Q177.3 8.8 177.3 10.5 V12.5" stroke="#4aa0f0" stroke-width="1.8" fill="none"/>
 <path d="M160.6 12.2 H182 V28 Q182 30 180 30 H162.6 Q160.6 30 160.6 28 Z" fill="url(#storeg)"/>
 <rect x="167" y="16.5" width="4" height="4" fill="#f35325"/><rect x="171.8" y="16.5" width="4" height="4" fill="#81bc06"/>
 <rect x="167" y="21.3" width="4" height="4" fill="#05a6f0"/><rect x="171.8" y="21.3" width="4" height="4" fill="#ffba08"/>
 <!-- settings gear -->
 <g transform="translate(218.8 19.2)">
  <circle r="8.8" fill="#6e7680"/>
  <g fill="#6e7680"><rect x="-3" y="-11.5" width="6" height="5" rx="1"/><rect x="-3" y="6.5" width="6" height="5" rx="1"/>
  <rect x="-3" y="-11.5" width="6" height="5" rx="1" transform="rotate(60)"/><rect x="-3" y="6.5" width="6" height="5" rx="1" transform="rotate(60)"/>
  <rect x="-3" y="-11.5" width="6" height="5" rx="1" transform="rotate(120)"/><rect x="-3" y="6.5" width="6" height="5" rx="1" transform="rotate(120)"/></g>
  <circle r="6" fill="#f0f0f0"/>
  <circle r="4.4" fill="#1a62c8"/>
 </g>
</svg>
<!-- tray -->
<svg class="a" style="left:810px;top:688.5px" width="90" height="22" viewBox="0 0 90 22">
 <path d="M2.5 12 L6.5 8 L10.5 12" stroke="#333" stroke-width="1.1" fill="none"/>
 <path d="M23.5 8 Q23.5 6.5 25 6.5 H27 L30.5 3.5 V12.5 L27 10.5 H25 Q23.5 10.5 23.5 9 Z" fill="none" stroke="#222" stroke-width="1.1"/>
 <circle cx="32" cy="15" r="4.2" fill="#111"/>
 <path d="M30 13 L34 17 M34 13 L30 17" stroke="#fff" stroke-width="1"/>
 <rect x="45.5" y="3.5" width="12" height="10" fill="none" stroke="#222" stroke-width="1.2"/>
 <path d="M49 17.5 H55 M52 13.5 V17.5" stroke="#222" stroke-width="1.2"/>
 <rect x="56" y="2" width="4" height="6" fill="#bebebe" stroke="#222" stroke-width="1"/>
 <path d="M58 8 V17" stroke="#222" stroke-width="1"/>
 <path d="M71 12 Q68 12 68 9.5 Q68 7 71 7 Q72 4 75.5 4 Q79 4 80 7.5 Q83 7.5 83 10 Q83 12.5 80 12.5 Z" fill="none" stroke="#222" stroke-width="1.1"/>
 <path d="M68 3 L82 17" stroke="#222" stroke-width="1.1"/>
</svg>
<div class="t" style="left:906.5px;top:686px;font:10.5px/10.5px 'Liberation Sans';color:#262626;letter-spacing:-0.6px">3:07 PM</div>
<div class="t" style="left:900.5px;top:701px;font:10.5px/10.5px 'Liberation Sans';color:#262626;letter-spacing:-0.36px">11/15/2025</div>
</body></html>
